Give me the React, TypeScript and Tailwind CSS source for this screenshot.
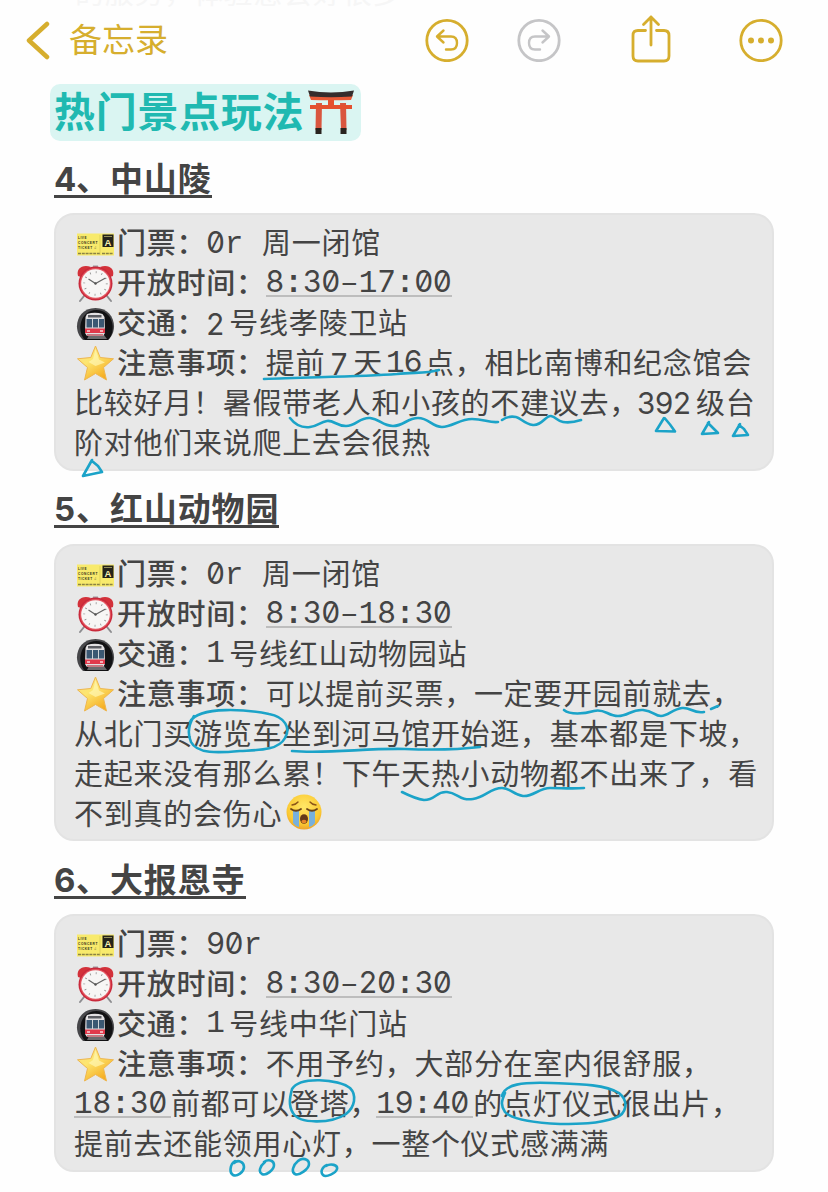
import type { ReactNode } from "react"

// Characters of a fixed-pitch run, zeros get the slashed form
function Mono({ children, cell = "w-[18.6px]", className = "" }: { children: string; cell?: string; className?: string }) {
  return (
    <span className={`inline-flex items-baseline tracking-normal ${className}`}>
      {children.split("").map((ch, i) => (
        <span
          key={i}
          className={`${cell} shrink-0 text-center ${ch === "0" ? "font-['Inter'] text-[29.500px] [font-feature-settings:'zero']" : /[2-9]/.test(ch) ? "font-['Inter'] text-[29.500px]" : ch === ":" ? "font-['Liberation_Mono'] text-[31px] font-bold" : "font-['Liberation_Mono'] text-[31px]"}`}
        >
          {ch === "-" ? "–" : ch}
        </span>
      ))}
    </span>
  )
}

function Time({ children, className = "" }: { children: string; className?: string }) {
  return (
    <span className={`inline-flex h-[27px] items-start border-b-2 border-[#bdbdbd] leading-[22px] ${className}`}>
      <Mono>{children}</Mono>
    </span>
  )
}

function Num({ children, className = "" }: { children: string; className?: string }) {
  return <Mono cell="w-[18px]" className={className}>{children}</Mono>
}

function Ticket() {
  return (
    <svg viewBox="0 0 42 40" className="ml-px h-10 w-[42px] shrink-0">
      <rect x="2" y="9.500" width="37" height="22" fill="#f8ea6c" />
      <g fill="#33301a" fontFamily="Liberation Sans" fontWeight="bold" fontSize="4.200">
        <text x="3" y="14.500" textLength="9" lengthAdjust="spacingAndGlyphs">LIVE</text>
        <text x="3" y="19.800" textLength="20" lengthAdjust="spacingAndGlyphs">CONCERT</text>
        <text x="3" y="25.100" textLength="19" lengthAdjust="spacingAndGlyphs">TICKET ♫</text>
      </g>
      <path d="M3 29.500h22M27 29.500h11" stroke="#8b8344" strokeWidth="1.400" strokeDasharray="3 .8" />
      <path d="M25 11v20" stroke="#d6c955" strokeWidth=".7" />
      <rect x="27.500" y="10.500" width="11" height="12.500" fill="#24221a" />
      <path d="M29 12.500h8" stroke="#b4ad6a" strokeWidth=".8" />
      <text x="29.500" y="21.500" fill="#f6f0b0" fontFamily="Liberation Sans" fontWeight="bold" fontSize="9.500">A</text>
    </svg>
  )
}

function Clock() {
  return (
    <svg viewBox="0 0 42 40" className="ml-px h-10 w-[42px] shrink-0">
      <path d="M9 32l-4 5M32 32l4 5" stroke="#8d8d90" strokeWidth="2" strokeLinecap="round" />
      <path d="M3 12C1 5 7 0 16 3L6 13zM38 12C40 5 34 0 25 3l10 10z" fill="#d3313a" />
      <path d="M18 1.500h5v3h-5z" fill="#9b9ba0" />
      <circle cx="20.500" cy="19.500" r="17" fill="#c9293b" />
      <circle cx="20.500" cy="19.500" r="15.500" fill="#e4555f" />
      <circle cx="20.500" cy="19.500" r="14.300" fill="#f7f6f5" />
      <circle cx="20.500" cy="19.500" r="11.300" fill="none" stroke="#8b8b8b" strokeWidth="2" strokeDasharray=".8 5.11" />
      <path d="M13.500 15l7 4.500 10-5.500" fill="none" stroke="#666" strokeWidth="1.200" />
      <circle cx="20.500" cy="19.500" r="1.200" fill="#555" />
    </svg>
  )
}

function Metro() {
  return (
    <svg viewBox="0 0 42 40" className="ml-px h-10 w-[42px] shrink-0">
      <path d="M8 36C-3 27 1 4 20.500 4S44 27 33 36z" fill="#47474a" />
      <path d="M10 36C1 27 5 6 21.500 6S42 27 33 36z" fill="#111113" />
      <path d="M12 35l2-4h15l3 4z" fill="#6a6a6d" />
      <path d="M12 10q8-2.500 15.500 0l2 3L30 29l-2 3H12l-2-3L10.500 13z" fill="#e2e0e2" />
      <path d="M13 11h13.500v2.500H13z" fill="#5b5c62" />
      <path d="M11.500 15h17.500v8.500H11.500z" fill="#3b5873" />
      <path d="M17 15h1v9h-1zM23 15h1v9h-1z" fill="#cfd4d8" />
      <path d="M10 24.500h20V29H10z" fill="#e0394b" />
      <path d="M12 31h16" stroke="#b33240" strokeWidth="1.200" />
      <path d="M12 27h3M25 27h3" stroke="#f7d5d8" strokeWidth="1.400" />
    </svg>
  )
}

function Star() {
  return (
    <svg viewBox="0 0 42 40" className="ml-px h-10 w-[42px] shrink-0">
      <defs>
        <linearGradient id="star" x1="0" y1="0" x2=".7" y2="1">
          <stop offset="0" stopColor="#f9dc80" />
          <stop offset=".45" stopColor="#fde670" />
          <stop offset="1" stopColor="#f5a91b" />
        </linearGradient>
      </defs>
      <path
        d="M20.500 2l4.700 11.500 13.300 1.300-10 8.700 3 12.500-11-6.500L9.500 36l3-12.500-10-8.700 13.300-1.300z"
        fill="url(#star)"
        stroke="#eeb650"
        strokeWidth="1"
        strokeLinejoin="round"
      />
      <path d="M20.500 5l3.500 10.500 6 3-9.500 3.500-7-4 4.500-3z" fill="#fff6b4" opacity=".7" />
    </svg>
  )
}

function Crying() {
  return (
    <svg viewBox="0 0 36 36" className="-mt-1 ml-1 h-9 w-9 shrink-0">
      <defs>
        <radialGradient id="face" cx=".5" cy=".35" r=".7">
          <stop offset="0" stopColor="#ffe767" />
          <stop offset=".7" stopColor="#fbc932" />
          <stop offset="1" stopColor="#e8972a" />
        </radialGradient>
      </defs>
      <circle cx="18" cy="18" r="17.500" fill="url(#face)" />
      <path d="M6 11q4-.5 6-3M30 11q-4-.5-6-3" stroke="#8c5518" strokeWidth="1.400" fill="none" strokeLinecap="round" />
      <path d="M7 17h6v16q-4-1-6-4zM23 17h6v12q-2 3-6 4z" fill="#77b0dc" />
      <path d="M5 15q5 3.500 10 0M21 15q5 3.500 10 0" stroke="#6a4317" strokeWidth="1.800" fill="none" strokeLinecap="round" />
      <ellipse cx="18" cy="25" rx="4" ry="4.800" fill="#643a1a" />
      <ellipse cx="18" cy="27.500" rx="2.600" ry="1.800" fill="#e8862a" />
    </svg>
  )
}

function Torii() {
  return (
    <svg viewBox="0 0 48 46" className="-mt-0.5 ml-[3px] h-[46px] w-12 shrink-0">
      <path d="M9 14h6l-.5 27H8.500zM33 14h6l.500 27H34z" fill="#d9563f" />
      <path d="M21 11h6v8h-6zM3 16h42v4H3z" fill="#e4502f" />
      <path d="M2 6q22 4 44 0l-2 5Q24 11.500 4 11z" fill="#e85a36" />
      <path d="M1 1.500q23 4 46 0l-2 6Q24 9 3 7.500z" fill="#352d2c" />
      <path d="M8.500 39h6v6h-6zM33.500 39h6v6h-6z" fill="#28231f" />
    </svg>
  )
}

function Row({ children }: { children: ReactNode }) {
  return <div className="flex h-[39.9px] items-center whitespace-pre">{children}</div>
}

function Label({ children }: { children: string }) {
  return <span className="font-medium">{children}</span>
}

function Heading({ num, children }: { num: string; children: string }) {
  return (
    <h2 className="flex h-[35px] w-fit items-center border-b-[3.500px] border-[#444] pt-px text-[33px] font-bold tracking-[0.9px] text-[#444]">
      <span className="w-[22px] font-['Inter'] text-[33px] tracking-normal">{num}</span>、{children}
    </h2>
  )
}

function Card({ box, ink, className = "", children }: { box: string; ink: ReactNode; className?: string; children: ReactNode }) {
  return (
    <section className={`relative w-[720px] rounded-[20px] border-2 border-[#e3e3e3] bg-[#e8e8e8] pl-[18px] pt-[9px] text-[29px] tracking-[0.74px] text-[#444] ${className}`}>
      {children}
      {/* Pen strokes over the text */}
      <svg
        viewBox={box}
        className="pointer-events-none absolute -left-0.5 -top-0.5 w-[720px] overflow-visible"
        fill="none"
        stroke="#1ba3c8"
        strokeWidth="2.600"
        strokeLinecap="round"
        strokeLinejoin="round"
      >
        {ink}
      </svg>
    </section>
  )
}

function Toolbar() {
  return (
    <header className="flex h-[84px] items-start text-[#d6ae2e]">
      <svg viewBox="0 0 26 40" className="ml-[25px] mt-5 h-10 w-[26px]" fill="none" stroke="currentColor" strokeWidth="4.500" strokeLinecap="round" strokeLinejoin="round">
        <path d="M22 4L4 20.500 22 37" />
      </svg>
      <span className="ml-[18px] mt-[15px] h-[50px] text-[33px] leading-[50px]">备忘录</span>
      <svg viewBox="0 0 44 44" className="ml-[257px] mt-[18px] size-11" fill="none" stroke="currentColor" strokeWidth="2.800" strokeLinecap="round" strokeLinejoin="round">
        <circle cx="22" cy="22.500" r="20.200" />
        <path d="M18.500 12.500l-6.500 6 6.500 6M12.500 18.500h13.500q6 0 6 6.500t-6 6.500h-5" strokeWidth="2.400" />
      </svg>
      <svg viewBox="0 0 44 44" className="ml-12 mt-[18px] size-11 text-[#c5c5c7]" fill="none" stroke="currentColor" strokeWidth="2.800" strokeLinecap="round" strokeLinejoin="round">
        <circle cx="22" cy="22.500" r="20.200" />
        <path d="M25.500 12.500l6.500 6-6.500 6M31.500 18.500H18q-6 0-6 6.500t6 6.500h5" strokeWidth="2.400" />
      </svg>
      <svg viewBox="0 0 44 50" className="ml-[68px] mt-[14px] h-[50px] w-11" fill="none" stroke="currentColor" strokeWidth="2.800" strokeLinecap="round" strokeLinejoin="round">
        <path d="M16.500 16.500H9q-5 0-5 5V42q0 5 5 5h26q5 0 5-5V21.500q0-5-5-5h-7.500M22 31V3M14.500 10.500L22 3l7.500 7.500" />
      </svg>
      <svg viewBox="0 0 44 44" className="ml-[66px] mt-[18px] size-11" fill="none" stroke="currentColor" strokeWidth="2.800">
        <circle cx="22" cy="22.500" r="20.200" />
        <g fill="currentColor" stroke="none">
          <circle cx="12" cy="22.500" r="3" />
          <circle cx="22" cy="22.500" r="3" />
          <circle cx="32" cy="22.500" r="3" />
        </g>
      </svg>
    </header>
  )
}

export default function App() {
  return (
    <main className="relative h-[1192px] w-[828px] overflow-hidden bg-[#fefefe] font-['Inter','Noto_Sans_CJK_SC',sans-serif]">
      {/* Note line scrolled away under the toolbar */}
      <p className="absolute -top-[26px] left-[75px] text-[29px] leading-10 tracking-[0.74px] text-[#f6f6f6]">的服务，体验感会好很多</p>
      <Toolbar />

      <div className="ml-[50px] flex h-[57px] w-[311px] items-center rounded-[10px] bg-[#daf5f2] pl-1 text-[41px] font-bold tracking-[0.7px] text-[#20b9b1]">
        <h1>热门景点玩法</h1>
        <Torii />
      </div>

      <div className="ml-[54px] mt-[22px]">
        <Heading num="4">中山陵</Heading>
        <Card
          box="54 213 720 258"
          className="mt-[15px] h-[258px]"
          ink={
            <>
              <path d="M264 379c40-2 95-2 133-5 18-2 28 0 42-4" />
              <path d="M290 418c6 8 12 10 20 9s10-5 17-6 9 5 19 5 14-9 24-8 12 8 23 8 14-8 25-8 14 9 24 9 18-8 30-8 17 4 26 3M502 420c4-3 9-4 14-3s8 7 17 8 13-10 18-9 6 5 12 6 12 0 18-2" />
              <path d="M664 418l-8 13 19 .5-5-7-5-6M709 422l-7 12 16-1-5-5-5-5M740 424l-7 12 15-1-4-6-5-4M92 460l-9 16 19-4-4-6-6-5" />
            </>
          }
        >
          <Row><Ticket /><Label>门票：</Label><Mono>0r </Mono>周一闭馆</Row>
          <Row><Clock /><Label>开放时间：</Label><Time>8:30-17:00</Time></Row>
          <Row><Metro /><Label>交通：</Label><Num className="mr-[5px]">2</Num>号线孝陵卫站</Row>
          <Row><Star /><Label>注意事项：</Label>提前<Num className="mx-[5px]">7</Num>天<Num className="mx-[3px]">16</Num>点，相比南博和纪念馆会</Row>
          <Row>比较好月！暑假带老人和小孩的不建议去，<Num className="-ml-0.5 mr-[5px]">392</Num>级台</Row>
          <Row>阶对他们来说爬上去会很热</Row>
        </Card>
      </div>

      <div className="ml-[54px] mt-[22px]">
        <Heading num="5">红山动物园</Heading>
        <Card
          box="54 544 720 297"
          className="mt-4 h-[297px]"
          ink={
            <>
              <path d="M564 710c6 5 20 4 30 1s14 5 24 5 14-7 25-6 11 6 18 6 12-7 21-8 11 6 22 4M711 709l7-3" />
              <path d="M190 722c9-17 60-12 79-8 16 3 22 14 16 24-7 13-28 12-45 13-22 2-43 3-49-9-4-9-2-18 3-26" />
              <path d="M292 751c35 3 75-3 113-2 26 1 50 1 75-2" />
              <path d="M402 792c8 4 14 7 22 8 12 0 12-9 23-8s13 9 26 7 17-11 29-11c9 0 11 7 21 8s16-8 27-8 23 1 34 0" />
            </>
          }
        >
          <Row><Ticket /><Label>门票：</Label><Mono>0r </Mono>周一闭馆</Row>
          <Row><Clock /><Label>开放时间：</Label><Time>8:30-18:30</Time></Row>
          <Row><Metro /><Label>交通：</Label><Num className="mr-[5px]">1</Num>号线红山动物园站</Row>
          <Row><Star /><Label>注意事项：</Label>可以提前买票，一定要开园前就去，</Row>
          <Row>从北门买游览车坐到河马馆开始逛，基本都是下坡，</Row>
          <Row>走起来没有那么累！下午天热小动物都不出来了，看</Row>
          <Row>不到真的会伤心<Crying /></Row>
        </Card>
      </div>

      <div className="ml-[54px] mt-[23px]">
        <Heading num="6">大报恩寺</Heading>
        <Card
          box="54 914 720 258"
          className="mt-[15px] h-[258px]"
          ink={
            <>
              <path d="M292 1089c8-13 46-10 58-1 7 7 5 19-4 26-15 10-47 10-53-1-5-8-3-16-1-24" />
              <path d="M502 1096c3-12 20-14 49-13 26 1 53 1 68 10 10 8 8 21-4 25-17 6-37 6-55 6-21-1-48-4-55-12-5-7-3-12 0-19" />
              <path d="M235 1161c-5 3-6 12-2 14s11-3 11-8-6-8-10-4M265 1162c-5 4-7 10-3 12s12-4 12-9-6-6-10-3M298 1161c-5 4-7 11-3 13s14-5 14-10-7-7-11-3M327 1165c-5 2-7 7-4 10s13-2 14-6-6-6-11-3" />
            </>
          }
        >
          <Row><Ticket /><Label>门票：</Label><Mono>90r</Mono></Row>
          <Row><Clock /><Label>开放时间：</Label><Time>8:30-20:30</Time></Row>
          <Row><Metro /><Label>交通：</Label><Num className="mr-[5px]">1</Num>号线中华门站</Row>
          <Row><Star /><Label>注意事项：</Label>不用予约，大部分在室内很舒服，</Row>
          <Row><Time className="pr-1">18:30</Time>前都可以登塔，<Time className="-ml-[3px] pr-1">19:40</Time>的点灯仪式很出片，</Row>
          <Row>提前去还能领用心灯，一整个仪式感满满</Row>
        </Card>
      </div>
    </main>
  )
}
